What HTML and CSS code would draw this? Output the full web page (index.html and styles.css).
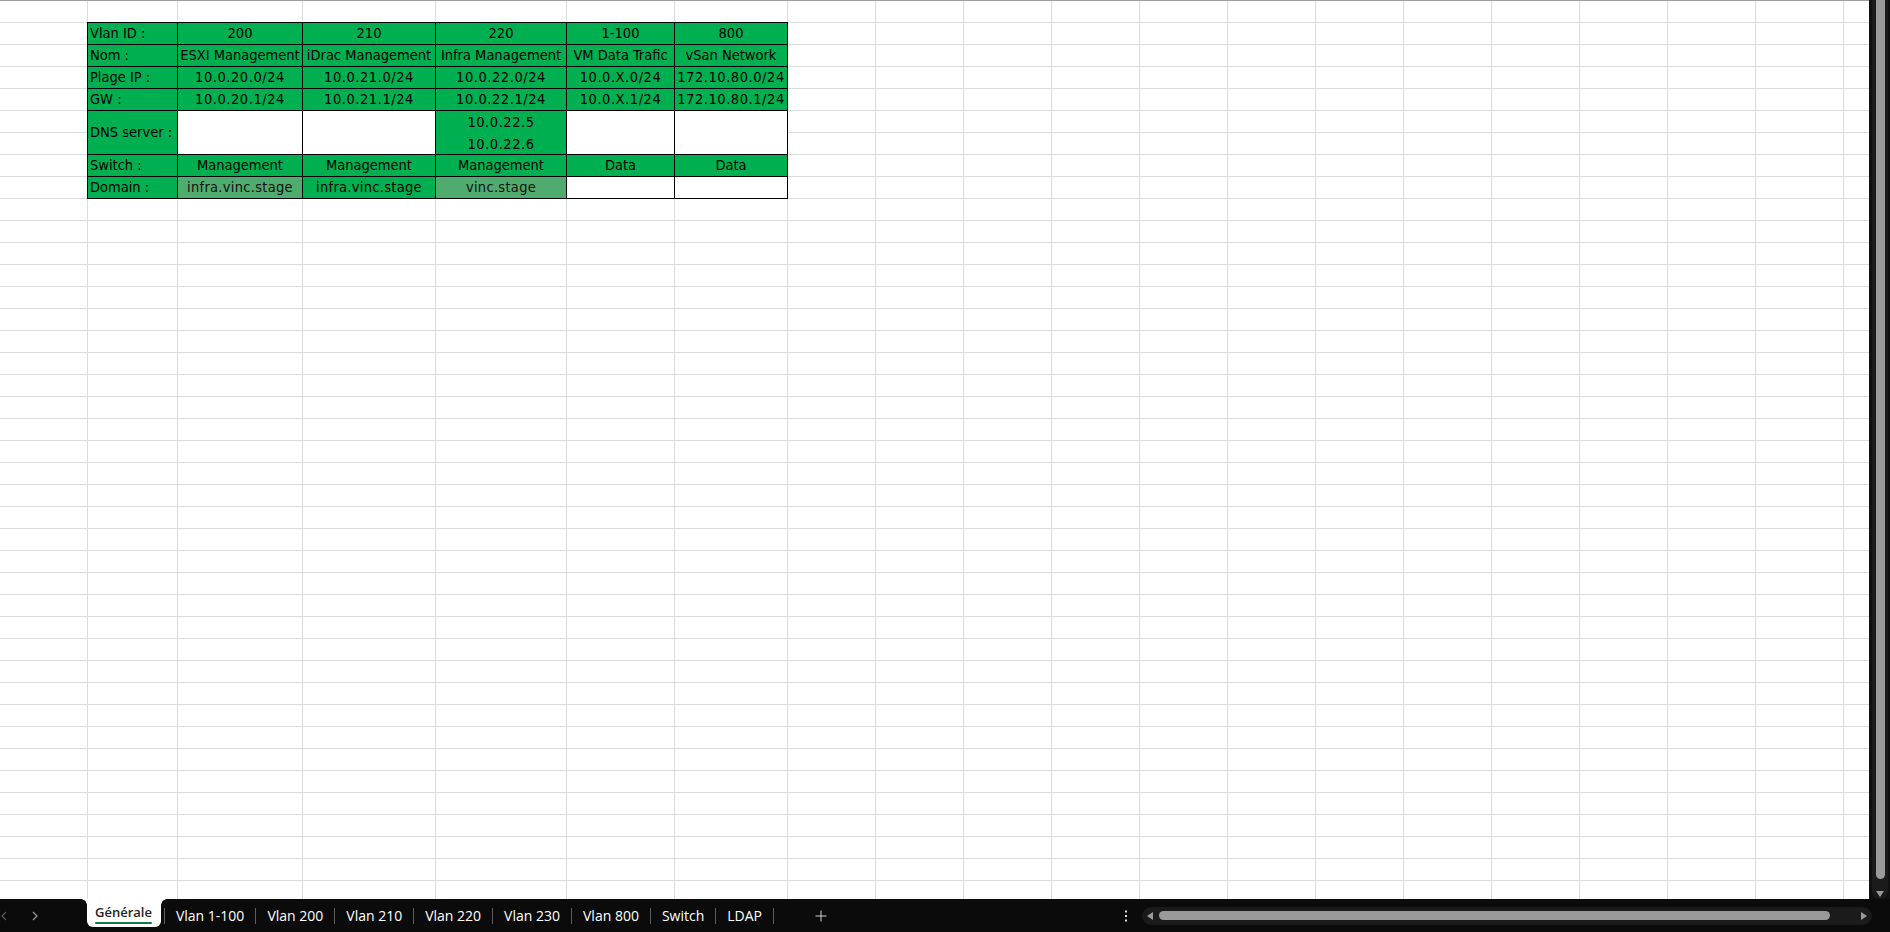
FILE: index.html
```html
<!DOCTYPE html>
<html lang="fr">
<head>
<meta charset="utf-8">
<title>Générale</title>
<link rel="stylesheet" href="styles.css">
</head>
<body>
<div class="app">
  <div class="sheet-area">
    <div class="grid">
      <div class="grid-used">
        <div class="vlan-table">
          <div class="c lab">Vlan ID :</div>
          <div class="c">200</div>
          <div class="c">210</div>
          <div class="c">220</div>
          <div class="c">1-100</div>
          <div class="c">800</div>

          <div class="c lab">Nom :</div>
          <div class="c">ESXI Management</div>
          <div class="c">iDrac Management</div>
          <div class="c">Infra Management</div>
          <div class="c">VM Data Trafic</div>
          <div class="c">vSan Network</div>

          <div class="c lab">Plage IP :</div>
          <div class="c num">10.0.20.0/24</div>
          <div class="c num">10.0.21.0/24</div>
          <div class="c num">10.0.22.0/24</div>
          <div class="c num">10.0.X.0/24</div>
          <div class="c num">172.10.80.0/24</div>

          <div class="c lab">GW :</div>
          <div class="c num">10.0.20.1/24</div>
          <div class="c num">10.0.21.1/24</div>
          <div class="c num">10.0.22.1/24</div>
          <div class="c num">10.0.X.1/24</div>
          <div class="c num">172.10.80.1/24</div>

          <div class="c lab tall">DNS server :</div>
          <div class="c blank"></div>
          <div class="c blank"></div>
          <div class="c multi num">10.0.22.5<br>10.0.22.6</div>
          <div class="c blank"></div>
          <div class="c blank"></div>

          <div class="c lab">Switch :</div>
          <div class="c">Management</div>
          <div class="c">Management</div>
          <div class="c">Management</div>
          <div class="c">Data</div>
          <div class="c">Data</div>

          <div class="c lab">Domain :</div>
          <div class="c soft dom">infra.vinc.stage</div>
          <div class="c dom">infra.vinc.stage</div>
          <div class="c soft dom">vinc.stage</div>
          <div class="c blank"></div>
          <div class="c blank"></div>
        </div>
      </div>
      <div class="grid-rest"></div>
    </div>
    <div class="vscroll">
      <div class="vtrack">
        <div class="vthumb"></div>
        <svg class="vdown" width="8" height="6" viewBox="0 0 8 6"><polygon points="0,0 8,0 4,6" fill="#9a9a9a"/></svg>
      </div>
    </div>
  </div>

  <div class="tabbar">
    <div class="nav">
      <svg class="nav-prev" width="6" height="10" viewBox="0 0 6 10"><polyline points="5,1 1,5 5,9" fill="none" stroke="#5a5a5a" stroke-width="1.2"/></svg>
      <svg class="nav-next" width="6" height="10" viewBox="0 0 6 10"><polyline points="1,1 5,5 1,9" fill="none" stroke="#9a9a9a" stroke-width="1.2"/></svg>
    </div>
    <div class="tabs">
      <div class="tab active"><span class="tab-label">Générale</span><span class="uline"></span></div>
      <i class="sep"></i>
      <div class="tab">Vlan 1-100</div>
      <i class="sep"></i>
      <div class="tab">Vlan 200</div>
      <i class="sep"></i>
      <div class="tab">Vlan 210</div>
      <i class="sep"></i>
      <div class="tab">Vlan 220</div>
      <i class="sep"></i>
      <div class="tab">Vlan 230</div>
      <i class="sep"></i>
      <div class="tab">Vlan 800</div>
      <i class="sep"></i>
      <div class="tab">Switch</div>
      <i class="sep"></i>
      <div class="tab">LDAP</div>
      <i class="sep"></i>
    </div>
    <div class="add">
      <svg width="12" height="12" viewBox="0 0 12 12"><path d="M6 0.5V11.5M0.5 6H11.5" stroke="#d0d0d0" stroke-width="1" fill="none"/></svg>
    </div>
    <div class="more">
      <svg width="4" height="12" viewBox="0 0 4 12"><rect x="1" y="0.5" width="2" height="2" fill="#e0e0e0"/><rect x="1" y="5" width="2" height="2" fill="#e0e0e0"/><rect x="1" y="9.5" width="2" height="2" fill="#e0e0e0"/></svg>
    </div>
    <div class="htrack">
      <svg class="hleft" width="6" height="8" viewBox="0 0 6 8"><polygon points="6,0 6,8 0,4" fill="#9a9a9a"/></svg>
      <div class="hthumb"></div>
      <svg class="hright" width="6" height="8" viewBox="0 0 6 8"><polygon points="0,0 0,8 6,4" fill="#9a9a9a"/></svg>
    </div>
  </div>
</div>
</body>
</html>
```

FILE: styles.css
```css
* {
  box-sizing: border-box;
}

html,
body {
  margin: 0;
  padding: 0;
}

body {
  width: 1890px;
  height: 932px;
  overflow: hidden;
  background: #ffffff;
}

.app {
  display: flex;
  flex-direction: column;
  width: 1890px;
  height: 932px;
}

/* ---------- sheet ---------- */
.sheet-area {
  display: flex;
  height: 899px;
  flex: none;
}

.grid {
  display: flex;
  width: 1869px;
  height: 899px;
  overflow: hidden;
  background: #ffffff;
}

.grid-used {
  flex: none;
  width: 788px;
  height: 100%;
  padding: 22px 0 0 87px;
  background-image:
    linear-gradient(#9e9e9e, #9e9e9e),
    linear-gradient(#dcdcdc, #dcdcdc),
    linear-gradient(#dcdcdc, #dcdcdc),
    linear-gradient(#dcdcdc, #dcdcdc),
    linear-gradient(#dcdcdc, #dcdcdc),
    linear-gradient(#dcdcdc, #dcdcdc),
    linear-gradient(#dcdcdc, #dcdcdc),
    linear-gradient(#dcdcdc, #dcdcdc),
    linear-gradient(to bottom, #dcdcdc 0, #dcdcdc 1px, transparent 1px);
  background-size:
    100% 1px,
    1px 100%, 1px 100%, 1px 100%, 1px 100%, 1px 100%, 1px 100%, 1px 100%,
    100% 22px;
  background-position:
    0 0,
    87px 0, 177px 0, 302px 0, 435px 0, 566px 0, 674px 0, 787px 0,
    0 0;
  background-repeat:
    no-repeat,
    no-repeat, no-repeat, no-repeat, no-repeat, no-repeat, no-repeat, no-repeat,
    repeat-y;
}

.grid-rest {
  flex: 1;
  height: 100%;
  background-image:
    linear-gradient(#9e9e9e, #9e9e9e),
    linear-gradient(to right, #dcdcdc 0, #dcdcdc 1px, transparent 1px),
    linear-gradient(to bottom, #dcdcdc 0, #dcdcdc 1px, transparent 1px);
  background-size: 100% 1px, 88px 100%, 100% 22px;
  background-position: 0 0, 87px 0, 0 0;
  background-repeat: no-repeat, repeat-x, repeat-y;
}

.vlan-table {
  display: grid;
  grid-template-columns: 90px 125px 133px 131px 108px 113px;
  grid-template-rows: 22px 22px 22px 22px 44px 22px 22px;
  width: 701px;
  border-left: 1px solid #000;
  border-top: 1px solid #000;
  font-family: "DejaVu Sans Condensed", "DejaVu Sans", sans-serif;
  font-stretch: condensed;
  font-size: 14.5px;
  color: #000;
}

.c {
  background: #00b050;
  border-right: 1px solid #000;
  border-bottom: 1px solid #000;
  text-align: center;
  line-height: 21px;
  white-space: nowrap;
  overflow: hidden;
}

.num {
  letter-spacing: 0.55px;
}

.dom {
  letter-spacing: 0.3px;
}

.lab {
  text-align: left;
  padding-left: 2px;
}

.tall {
  line-height: 43px;
}

.multi {
  line-height: 22px;
}

.blank {
  background: #ffffff;
}

.soft {
  background: #50ac6e;
  color: #111111;
}

/* ---------- vertical scrollbar ---------- */
.vscroll {
  flex: none;
  width: 21px;
  height: 899px;
  background: #111111;
  padding: 0 2px 0 3px;
}

.vtrack {
  height: 100%;
  background: #1b1b1b;
  border-radius: 0 0 8px 8px;
  display: flex;
  flex-direction: column;
  align-items: center;
}

.vthumb {
  width: 9px;
  height: 879px;
  background: #9a9a9a;
  border-radius: 0 0 5px 5px;
}

.vdown {
  margin-top: 12px;
  display: block;
}

/* ---------- tab bar ---------- */
.tabbar {
  flex: none;
  height: 33px;
  background: #0b0b0b;
  display: flex;
  align-items: center;
  font-family: "Open Sans", "Noto Sans", sans-serif;
  font-size: 14px;
  color: #ffffff;
}

.nav {
  flex: none;
  width: 87px;
  display: flex;
  align-items: center;
  padding-left: 1px;
  gap: 25px;
}

.nav svg {
  display: block;
}

.tabs {
  display: flex;
  align-items: center;
  align-self: stretch;
}

.tab {
  padding: 0 11px;
  white-space: nowrap;
  line-height: 20px;
}

.tab.active {
  position: relative;
  align-self: flex-start;
  height: 28px;
  padding: 0 9px 3px 8px;
  margin-right: 3px;
  display: flex;
  align-items: center;
  background: #ffffff;
  color: #242424;
  font-size: 13px;
  font-weight: 600;
  border-radius: 0 0 6px 6px;
}

.tab.active::before,
.tab.active::after {
  content: "";
  position: absolute;
  top: 0;
  width: 6px;
  height: 6px;
}

.tab.active::before {
  left: -6px;
  background: radial-gradient(circle at 0 100%, transparent 5.5px, #ffffff 6px);
}

.tab.active::after {
  right: -6px;
  background: radial-gradient(circle at 100% 100%, transparent 5.5px, #ffffff 6px);
}

.uline {
  position: absolute;
  left: 8px;
  right: 9px;
  bottom: 3px;
  height: 2px;
  border-radius: 1px;
  background: #107c41;
}

.sep {
  display: block;
  width: 1px;
  height: 16px;
  background: #5f5f5f;
  flex: none;
}

.add {
  margin-left: 41px;
  display: flex;
  align-items: center;
}

.add svg,
.more svg,
.htrack svg {
  display: block;
}

.more {
  margin-left: auto;
  margin-right: 14px;
}

.htrack {
  width: 730px;
  height: 18px;
  margin-right: 18px;
  border-radius: 9px;
  background: #1b1b1b;
  display: flex;
  align-items: center;
  padding: 0 5px;
}

.hthumb {
  width: 671px;
  height: 9px;
  margin-left: 6px;
  border-radius: 5px;
  background: #9a9a9a;
}

.hright {
  margin-left: auto;
}
```
